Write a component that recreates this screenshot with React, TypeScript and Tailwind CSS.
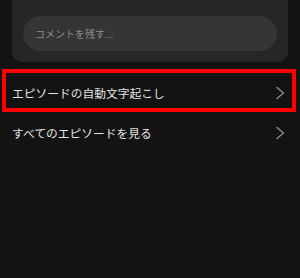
import React from 'react';

const font = { fontFamily: '"Noto Sans CJK JP", "Noto Sans", sans-serif' };

function Chevron() {
  return (
    <svg width="10" height="14" viewBox="0 0 10 14" fill="none" className="shrink-0">
      <path d="M2 1.5 L8.5 7 L2 12.5" stroke="#8a8a8a" strokeWidth="1.5" strokeLinecap="round" strokeLinejoin="round" />
    </svg>
  );
}

function Row({ label, highlighted }: { label: string; highlighted?: boolean }) {
  return (
    <div className="relative flex items-center justify-between h-[40px] pl-3 pr-[15px]">
      <span className="text-[11.75px] text-[#e4e4e4] leading-none">{label}</span>
      <Chevron />
      {highlighted && (
        <div className="absolute left-[2px] right-[4px] -top-[4px] bottom-[1px] border-4 border-[#ff0000] pointer-events-none" />
      )}
    </div>
  );
}

export default function App() {
  return (
    <div className="w-[300px] h-[278px] bg-[#131313] overflow-hidden" style={font}>
      {/* Comment card */}
      <div className="mx-3 -mt-[20px] pt-[36px] pb-[11px] px-[11px] bg-[#262626] rounded-[10px]">
        <div className="h-[35px] rounded-full bg-[#353535] flex items-center px-3">
          <span className="text-[10px] text-[#8c8c8c]">コメントを残す...</span>
        </div>
      </div>

      {/* Menu rows */}
      <div className="mt-[11px]">
        <Row label="エピソードの自動文字起こし" highlighted />
        <Row label="すべてのエピソードを見る" />
      </div>
    </div>
  );
}
